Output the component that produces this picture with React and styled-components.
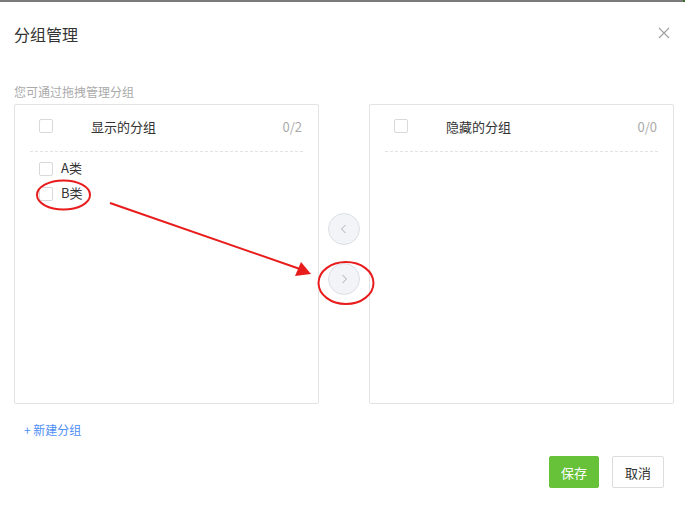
import React from "react";
import styled, { createGlobalStyle } from "styled-components";

const Global = createGlobalStyle`
  html, body { margin: 0; padding: 0; background: #fff; }
  body { font-family: "Noto Sans CJK SC", "Noto Sans", sans-serif; }
  * { box-sizing: border-box; }
`;

const Dialog = styled.div`
  position: relative;
  width: 685px;
  height: 507px;
  background: #fff;
  border-top: 2px solid #7a7a7a;
  padding: 0 11px 0 14px;
  display: flex;
  flex-direction: column;
`;

const Header = styled.div`
  display: flex;
  align-items: center;
  justify-content: space-between;
  height: 62px;
  padding-top: 1px;
`;

const Title = styled.div`
  font-size: 16px;
  color: #333;
`;

const Close = styled.div`
  width: 12px;
  height: 12px;
  margin-right: 4px;
  margin-top: -2px;
  display: flex;
`;

const Hint = styled.div`
  font-size: 12px;
  color: #aaa;
  line-height: 14px;
  margin-top: 21px;
  margin-bottom: 5px;
`;

const Transfer = styled.div`
  display: flex;
  align-items: stretch;
  height: 300px;
`;

const Panel = styled.div`
  width: 305px;
  flex-shrink: 0;
  border: 1px solid #e3e3e3;
  border-radius: 2px;
  padding: 0 15px;
  display: flex;
  flex-direction: column;
`;

const PanelHead = styled.div`
  height: 47px;
  display: flex;
  align-items: center;
  border-bottom: 1px dashed #e3e3e3;
  padding-left: 9px;
  padding-right: 1px;
  padding-bottom: 4px;
  font-size: 13px;
  color: #333;
`;

const Box = styled.span`
  width: 14px;
  height: 14px;
  border: 1px solid #d9d9d9;
  border-radius: 2px;
  background: #fff;
  flex-shrink: 0;
`;

const HeadLabel = styled.span`
  margin-left: ${p => p.$gap}px;
  flex: 1;
`;

const Count = styled.span`
  color: #aaa;
  font-size: 13px;
`;

const List = styled.div`
  padding-top: 4px;
  padding-left: 9px;
  display: flex;
  flex-direction: column;
`;

const Item = styled.div`
  height: 25px;
  display: flex;
  align-items: center;
  font-size: 13px;
  color: #333;
`;

const ItemLabel = styled.span`
  margin-left: 8px;
  margin-top: -2px;
`;

const Middle = styled.div`
  width: 50px;
  flex-shrink: 0;
  display: flex;
  flex-direction: column;
  align-items: center;
  justify-content: center;
  gap: 18px;
`;

const Arrow = styled.div`
  width: 32px;
  height: 32px;
  border-radius: 50%;
  border: 1px solid #dcdfe6;
  background: #f3f4f8;
  display: flex;
  align-items: center;
  justify-content: center;
`;

const NewLink = styled.div`
  margin-top: 18px;
  margin-left: 10px;
  font-size: 12px;
  color: #4d8ef5;
  line-height: 16px;
`;

const Footer = styled.div`
  display: flex;
  justify-content: flex-end;
  gap: 13px;
  margin-top: 18px;
  padding-right: 10px;
`;

const Button = styled.div`
  height: 32px;
  width: ${p => p.$w}px;
  display: flex;
  align-items: center;
  justify-content: center;
  font-size: 13px;
  border-radius: 2px;
  background: ${p => (p.$primary ? "#67c23a" : "#fff")};
  color: ${p => (p.$primary ? "#fff" : "#333")};
  border: 1px solid ${p => (p.$primary ? "#67c23a" : "#dcdcdc")};
`;

const Overlay = styled.svg`
  position: absolute;
  left: 0;
  top: -2px;
  pointer-events: none;
`;

const Corner = styled.span`
  position: absolute;
  right: 0;
  top: -2px;
  width: 2px;
  height: 2px;
  background: #3d6b2a;
`;

export default function App() {
  return (
    <>
      <Global />
      <Dialog>
        <Corner />
        <Header>
          <Title>分组管理</Title>
          <Close>
            <svg width="12" height="12" viewBox="0 0 12 12">
              <path d="M1 1L11 11M11 1L1 11" stroke="#a0a0a0" strokeWidth="1.1" />
            </svg>
          </Close>
        </Header>
        <Hint>您可通过拖拽管理分组</Hint>
        <Transfer>
          <Panel>
            <PanelHead>
              <Box />
              <HeadLabel $gap={38}>显示的分组</HeadLabel>
              <Count>0/2</Count>
            </PanelHead>
            <List>
              <Item><Box /><ItemLabel>A类</ItemLabel></Item>
              <Item><Box /><ItemLabel>B类</ItemLabel></Item>
            </List>
          </Panel>
          <Middle>
            <Arrow>
              <svg width="12" height="12" viewBox="0 0 12 12">
                <path d="M7.5 2L3.5 6l4 4" fill="none" stroke="#a9adb8" strokeWidth="1" />
              </svg>
            </Arrow>
            <Arrow>
              <svg width="12" height="12" viewBox="0 0 12 12">
                <path d="M4.5 2L8.5 6l-4 4" fill="none" stroke="#a9adb8" strokeWidth="1" />
              </svg>
            </Arrow>
          </Middle>
          <Panel>
            <PanelHead>
              <Box />
              <HeadLabel $gap={38}>隐藏的分组</HeadLabel>
              <Count>0/0</Count>
            </PanelHead>
          </Panel>
        </Transfer>
        <NewLink>+ 新建分组</NewLink>
        <Footer>
          <Button $primary $w={50}>保存</Button>
          <Button $w={52}>取消</Button>
        </Footer>
        <Overlay width="685" height="507" viewBox="0 0 685 507">
          <ellipse cx="63.5" cy="195" rx="26.5" ry="14.5" fill="none" stroke="#e81c1c" strokeWidth="2" />
          <line x1="110" y1="203" x2="300" y2="269" stroke="#e81c1c" strokeWidth="2" />
          <polygon points="311,274 295,276 301,262" fill="#e81c1c" />
          <ellipse cx="346" cy="283" rx="27.5" ry="21" fill="none" stroke="#e81c1c" strokeWidth="2" />
        </Overlay>
      </Dialog>
    </>
  );
}
